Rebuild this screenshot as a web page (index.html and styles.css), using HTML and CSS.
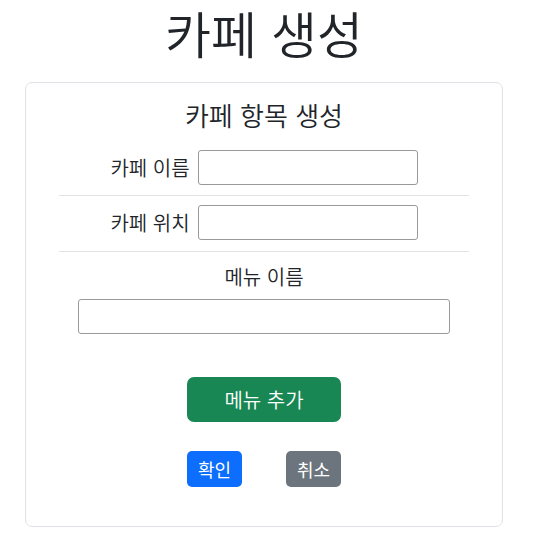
FILE: index.html
```html
<!DOCTYPE html>
<html lang="ko">
<head>
<meta charset="utf-8">
<title>카페 생성</title>
<link rel="stylesheet" href="styles.css">
</head>
<body>
<div class="page">
  <h1 class="title">카페 생성</h1>
  <div class="card">
    <h3 class="card-title">카페 항목 생성</h3>
    <div class="form">
      <div class="row">
        <label class="label">카페 이름</label>
        <input class="input" type="text">
      </div>
      <div class="row row-second">
        <label class="label">카페 위치</label>
        <input class="input" type="text">
      </div>
      <div class="menu">
        <div class="menu-label">메뉴 이름</div>
        <input class="input input-wide" type="text">
      </div>
      <div class="add-wrap">
        <button class="btn btn-add">메뉴 추가</button>
      </div>
      <div class="actions">
        <button class="btn btn-sm btn-primary">확인</button>
        <button class="btn btn-sm btn-secondary">취소</button>
      </div>
    </div>
  </div>
</div>
</body>
</html>
```

FILE: styles.css
```css
* { box-sizing: border-box; }
html, body { margin: 0; padding: 0; background: #fff; }
body {
  font-family: "Noto Sans CJK KR", "Noto Sans", sans-serif;
  font-weight: 350;
  color: #212529;
}
.page {
  width: 528px;
  padding-top: 0;
}
.title {
  margin: 0 0 17px;
  font-size: 50px;
  font-weight: 350;
  line-height: 65px;
  text-align: center;
}
.card {
  margin: 0 25px;
  border: 1px solid #dee2e6;
  border-radius: 7px;
  padding: 15px 0 39px;
}
.card-title {
  margin: 0 0 10px;
  font-size: 26px;
  font-weight: 350;
  line-height: 33px;
  text-align: center;
}
.form {
  padding: 0 33px;
}
.row {
  display: flex;
  justify-content: center;
  align-items: center;
  gap: 8px;
  padding: 9px 0 10px;
  border-bottom: 1px solid #e3e3e3;
}
.row-second {
  padding-bottom: 11px;
}
.label {
  font-size: 20px;
  line-height: 30px;
}
.input {
  width: 220px;
  height: 35px;
  border: 1px solid #999;
  border-radius: 3px;
  background: #fff;
  font: inherit;
  padding: 2px 6px;
}
.menu {
  display: flex;
  flex-direction: column;
  align-items: center;
  padding-top: 10px;
}
.menu-label {
  font-size: 20px;
  line-height: 30px;
  margin-bottom: 7px;
}
.input-wide {
  width: 372px;
}
.add-wrap {
  display: flex;
  justify-content: center;
  margin-top: 43px;
}
.btn {
  border: none;
  color: #fff;
  font-family: inherit;
  font-weight: 400;
  cursor: pointer;
}
.btn-add {
  width: 154px;
  height: 45px;
  border-radius: 7px;
  background: #198754;
  font-size: 20px;
  font-weight: 350;
}
.actions {
  display: flex;
  justify-content: center;
  gap: 44px;
  margin-top: 29px;
}
.btn-sm {
  width: 55px;
  height: 36px;
  border-radius: 5px;
  font-size: 18px;
  padding: 0;
}
.btn-primary { background: #0d6efd; }
.btn-secondary { background: #6c757d; }
```
